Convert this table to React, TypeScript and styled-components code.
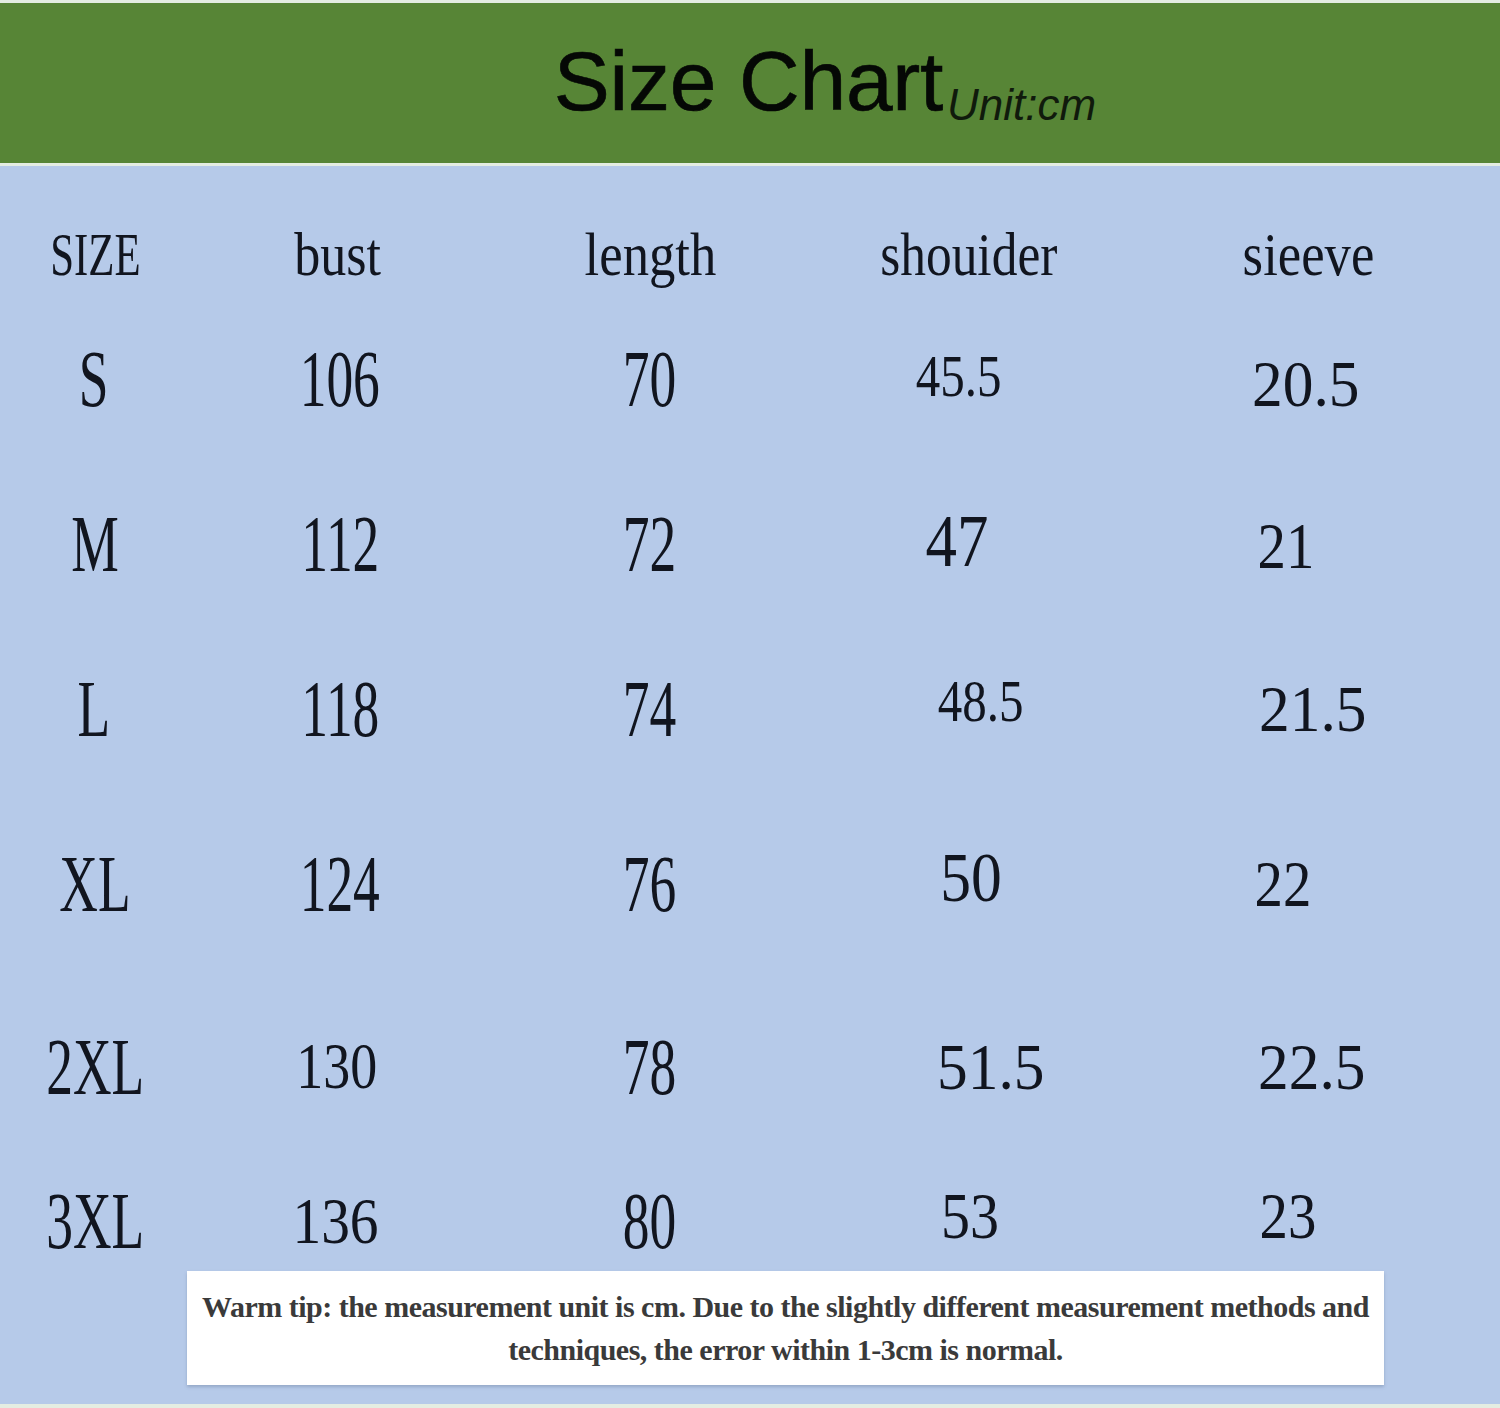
import styled, { createGlobalStyle } from "styled-components"

type CellData = {
  text: string
  size: number
  squeeze: number
  dx?: number
  dy?: number
}

type RowData = {
  gap: number
  cells: CellData[]
}

const cond = (text: string, dx = 0, dy = 0): CellData => ({ text, size: 81, squeeze: 0.66, dx, dy })
const plain = (text: string, squeeze: number, dx = 0, dy = 0, size = 66): CellData => ({ text, size, squeeze, dx, dy })

const rows: RowData[] = [
  {
    gap: 53,
    cells: [
      { text: 'SIZE', size: 62, squeeze: 0.69 },
      { text: 'bust', size: 62, squeeze: 0.84, dx: -2 },
      { text: 'length', size: 62, squeeze: 0.85, dx: 1 },
      { text: 'shouider', size: 62, squeeze: 0.83, dx: 0 },
      { text: 'sieeve', size: 62, squeeze: 0.85, dx: -2 },
    ],
  },
  {
    gap: 55,
    cells: [cond('S', -1), cond('106'), cond('70'), plain('45.5', 0.83, -10, -3, 59), plain('20.5', 0.93, -4, 5)],
  },
  {
    gap: 95,
    cells: [cond('M'), cond('112'), cond('72'), plain('47', 0.85, -12, -3, 74), plain('21', 0.86, -24, 2)],
  },
  {
    gap: 95,
    cells: [cond('L', -1), cond('118'), cond('74'), plain('48.5', 0.83, 12, -8, 59), plain('21.5', 0.93, 3)],
  },
  {
    gap: 105,
    cells: [cond('XL'), cond('124'), cond('76'), plain('50', 0.88, 2, -6, 70), plain('22', 0.86, -27)],
  },
  {
    gap: 113,
    cells: [cond('2XL'), plain('130', 0.83, -3, -1, 65), cond('78'), plain('51.5', 0.93, 22), plain('22.5', 0.93, 2)],
  },
  {
    gap: 84,
    cells: [cond('3XL'), plain('136', 0.87, -5, 0), cond('80'), plain('53', 0.88, 1, -5), plain('23', 0.86, -22, -5)],
  },
]

const App = () => (
  <Page>
    <GlobalStyle />
    <Header>
      <Title>Size Chart</Title>
      <Unit>Unit:cm</Unit>
    </Header>
    <Body>
      {rows.map((row, i) => (
        <Row key={i} $gap={row.gap}>
          {row.cells.map((c, j) => (
            <Cell
              key={j}
              $size={c.size}
              $squeeze={c.squeeze}
              $dx={c.dx ?? 0}
              $dy={c.dy ?? 0}
            >{c.text}</Cell>
          ))}
        </Row>
      ))}
      <Tip>
        Warm tip: the measurement unit is cm. Due to the slightly different measurement methods and
        <br />
        techniques, the error within 1-3cm is normal.
      </Tip>
    </Body>
  </Page>
)

export default App


/* styles */
const GlobalStyle = createGlobalStyle`
  html, body {
    margin: 0;
    padding: 0;
    background: #e4ede2;
  }
`

const Page = styled.div`
  width: 1500px;
  height: 1408px;
  padding-top: 3px;
  box-sizing: border-box;
  display: flex;
  flex-direction: column;
`

const Header = styled.div`
  height: 160px;
  background: #578536;
  display: flex;
  justify-content: center;
  align-items: baseline;
  padding-left: 150px;
  padding-top: 30px;
  box-sizing: border-box;
  font-family: "Liberation Sans", Arial, sans-serif;
  color: #050805;
`

const Title = styled.span`
  font-size: 84px;
  line-height: 96px;
  letter-spacing: -0.3px;
  -webkit-text-stroke: 0.6px #050805;
`

const Unit = styled.span`
  font-size: 44px;
  font-style: italic;
  color: #101a0c;
  position: relative;
  top: 10px;
  margin-left: 4px;
`

const Body = styled.div`
  margin-top: 3px;
  height: 1238px;
  background: #b6cae9;
  display: flex;
  flex-direction: column;
`

const Row = styled.div<{ $gap: number }>`
  margin-top: ${p => p.$gap}px;
  height: 70px;
  display: grid;
  grid-template-columns: 190px 300px 318px 322px 360px;
  align-items: center;
  justify-items: center;
`

const Cell = styled.span<{ $size: number, $squeeze: number, $dx: number, $dy: number }>`
  display: inline-block;
  font-family: "Liberation Serif", "Times New Roman", serif;
  font-size: ${p => p.$size}px;
  line-height: 70px;
  color: #11151f;
  white-space: nowrap;
  transform: translate(${p => p.$dx}px, ${p => p.$dy}px) scaleX(${p => p.$squeeze});
`

const Tip = styled.div`
  margin: 15px 0 0 187px;
  width: 1197px;
  height: 114px;
  background: #fff;
  box-shadow: 0 2px 3px rgba(90, 110, 140, 0.35);
  box-sizing: border-box;
  padding-top: 14px;
  text-align: center;
  font-family: "Liberation Serif", "Times New Roman", serif;
  font-weight: bold;
  font-size: 30px;
  line-height: 43px;
  letter-spacing: -0.5px;
  color: #3a3a3a;
  white-space: nowrap;
`
